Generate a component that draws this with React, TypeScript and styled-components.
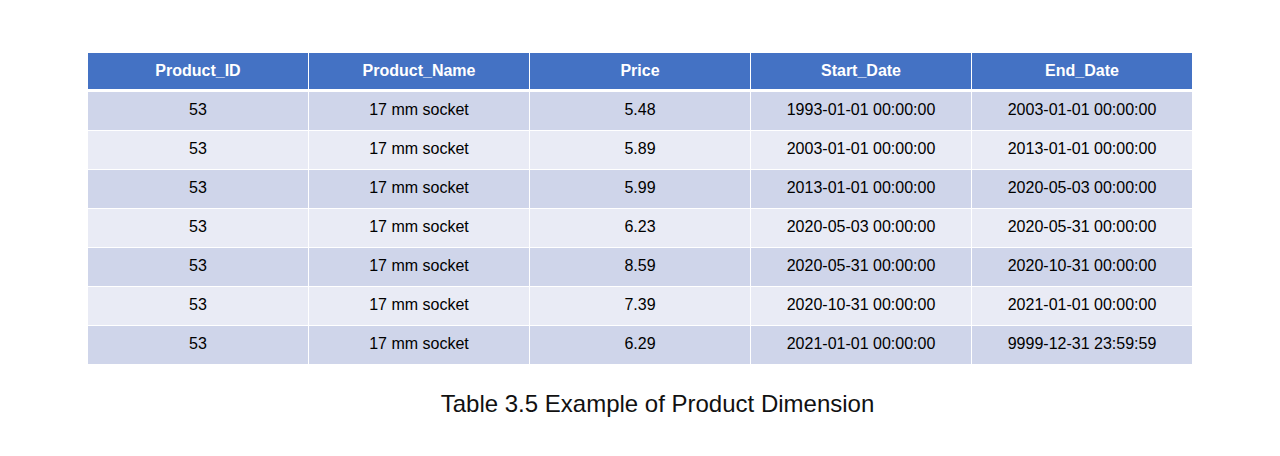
import { createGlobalStyle } from 'styled-components';
import styled from 'styled-components';

const GlobalStyle = createGlobalStyle`
  body {
    margin: 0;
    background: #ffffff;
    font-family: 'Liberation Sans', Arial, sans-serif;
  }
`;

const Page = styled.div`
  width: 1280px;
  height: 456px;
  padding: 53px 88px 0;
  box-sizing: border-box;
  background: #ffffff;
`;

const Table = styled.div`
  width: 1104px;
  display: flex;
  flex-direction: column;
  gap: 1px;
`;

const Row = styled.div<{ $head?: boolean }>`
  display: grid;
  grid-template-columns: repeat(5, 1fr);
  column-gap: 1px;
  height: ${({ $head }) => ($head ? '36px' : '38px')};
  margin-bottom: ${({ $head }) => ($head ? '2px' : '0')};
`;

const Cell = styled.div<{ $head?: boolean; $odd?: boolean }>`
  display: flex;
  align-items: center;
  justify-content: center;
  padding-bottom: ${({ $head }) => ($head ? '1px' : '3px')};
  box-sizing: border-box;
  font-size: 16px;
  font-weight: ${({ $head }) => ($head ? 700 : 400)};
  color: ${({ $head }) => ($head ? '#ffffff' : '#000000')};
  background: ${({ $head, $odd }) =>
    $head ? '#4472c4' : $odd ? '#cfd5ea' : '#e9ebf5'};
`;

const Caption = styled.div`
  width: 1104px;
  margin-top: 28px;
  padding-left: 35px;
  box-sizing: border-box;
  text-align: center;
  font-size: 24px;
  line-height: 24px;
  color: #111111;
`;

const COLUMNS = ['Product_ID', 'Product_Name', 'Price', 'Start_Date', 'End_Date'];

const ROWS = [
  ['53', '17 mm socket', '5.48', '1993-01-01 00:00:00', '2003-01-01 00:00:00'],
  ['53', '17 mm socket', '5.89', '2003-01-01 00:00:00', '2013-01-01 00:00:00'],
  ['53', '17 mm socket', '5.99', '2013-01-01 00:00:00', '2020-05-03 00:00:00'],
  ['53', '17 mm socket', '6.23', '2020-05-03 00:00:00', '2020-05-31 00:00:00'],
  ['53', '17 mm socket', '8.59', '2020-05-31 00:00:00', '2020-10-31 00:00:00'],
  ['53', '17 mm socket', '7.39', '2020-10-31 00:00:00', '2021-01-01 00:00:00'],
  ['53', '17 mm socket', '6.29', '2021-01-01 00:00:00', '9999-12-31 23:59:59'],
];

const App = () => (
  <Page>
    <GlobalStyle />
    <Table>
      <Row $head>
        {COLUMNS.map((c) => (
          <Cell $head key={c}>
            {c}
          </Cell>
        ))}
      </Row>
      {ROWS.map((r, i) => (
        <Row key={i}>
          {r.map((v, j) => (
            <Cell $odd={i % 2 === 0} key={j}>
              {v}
            </Cell>
          ))}
        </Row>
      ))}
    </Table>
    <Caption>Table 3.5 Example of Product Dimension</Caption>
  </Page>
);

export default App;
